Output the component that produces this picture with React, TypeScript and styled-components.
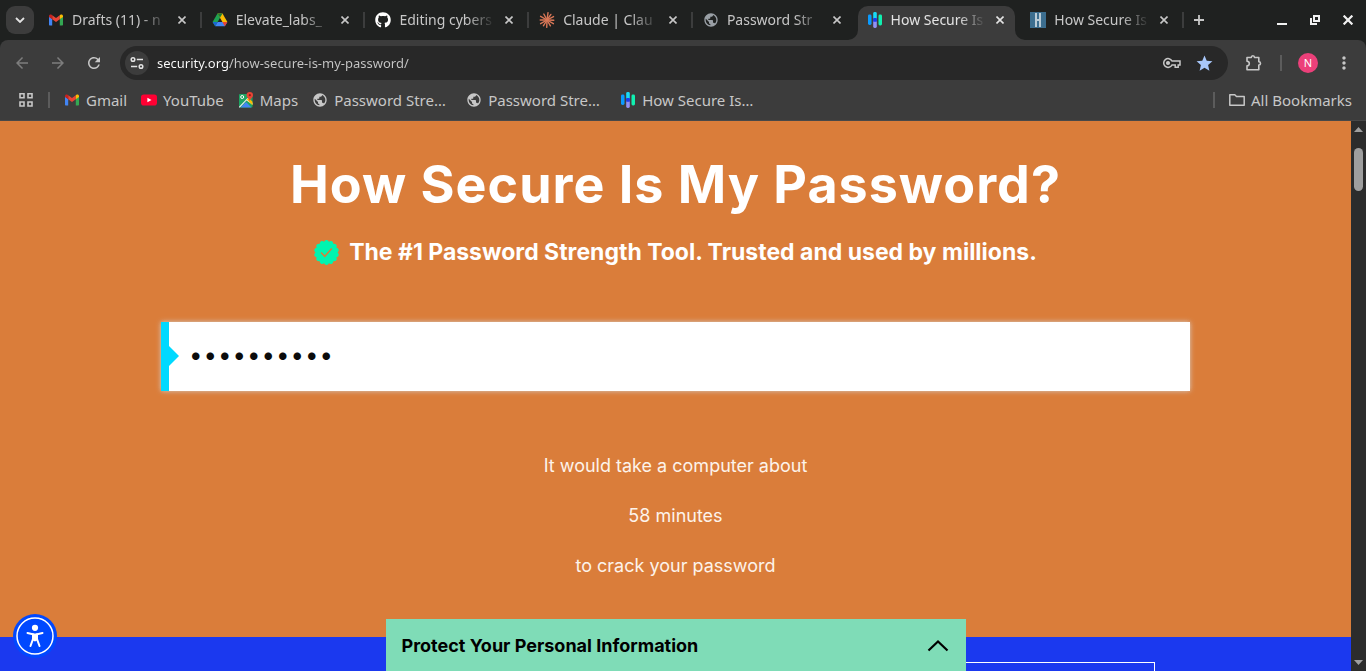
import React, { useState } from "react";
import styled, { createGlobalStyle, css } from "styled-components";
import { MdArrowBack, MdArrowForward, MdMoreVert, MdPublic, MdRefresh, MdStar } from "react-icons/md";
import { FaGithub } from "react-icons/fa";

const uiFont = '"Noto Sans", "Open Sans", sans-serif';
const siteFont = 'Inter, "Open Sans", sans-serif';

const colors = {
  strip: "#1f2120",
  toolbar: "#3c3c3c",
  omnibox: "#282828",
  uiText: "#c7c7c7",
  orange: "#da7d3a",
  blue: "#1b39ef",
  mint: "#7fdcb7",
  cyan: "#00d9ff",
};

const GlobalStyle = createGlobalStyle`
  *, *::before, *::after { box-sizing: border-box; }
  body { margin: 0; overflow: hidden; }
  button { border: 0; padding: 0; margin: 0; background: none; color: inherit; font: inherit; cursor: pointer; }
  a { color: inherit; text-decoration: none; }
  svg { display: block; flex: none; }
`;

const Browser = styled.div`
  display: flex;
  flex-direction: column;
  height: 100vh;
  font-family: ${uiFont};
  font-size: 14px;
  line-height: 20px;
  color: ${colors.uiText};
  background: ${colors.strip};
`;

/* ---------- tab strip ---------- */

const TabStrip = styled.header`
  display: flex;
  align-items: center;
  height: 40px;
  padding: 0 6px;
`;

const TabSearch = styled.button`
  display: grid;
  place-items: center;
  flex: none;
  width: 28px;
  height: 28px;
  margin-right: 2px;
  border-radius: 9px;
  background: ${colors.toolbar};
  color: #e3e3e3;
`;

const TabList = styled.div`
  display: flex;
  flex: 0 1 1146px;
  min-width: 0;
  height: 40px;
`;

const activeTab = css`
  &::before {
    content: "";
    position: absolute;
    z-index: 0;
    inset: 6px 3px 0;
    border-radius: 10px 10px 0 0;
    background: ${colors.toolbar};
  }
`;

const Flare = styled.svg<{ $side: "left" | "right" }>`
  position: absolute;
  bottom: 0;
  ${(p) => (p.$side === "left" ? "left: -7px;" : "right: -7px; transform: scaleX(-1);")}
`;

const TabItem = styled.div<{ $active?: boolean; $line?: boolean }>`
  position: relative;
  display: flex;
  align-items: center;
  flex: 1 1 0;
  min-width: 0;
  padding: 0 10px 0 12px;
  color: ${(p) => (p.$active ? "#e3e3e3" : colors.uiText)};
  ${(p) => p.$active && activeTab}
  ${(p) =>
    p.$line &&
    css`
      &::after {
        content: "";
        position: absolute;
        right: -2px;
        width: 2px;
        height: 16px;
        background: #3c3d3d;
      }
    `}
`;

const TabLabel = styled.button`
  position: relative;
  display: flex;
  align-items: center;
  gap: 8px;
  flex: 1;
  min-width: 0;
  height: 28px;
  text-align: left;
`;

const TabTitle = styled.span`
  flex: 1;
  min-width: 0;
  overflow: hidden;
  white-space: nowrap;
  mask-image: linear-gradient(90deg, #000 72%, transparent 102%);
`;

const CloseButton = styled.button`
  position: relative;
  display: grid;
  place-items: center;
  flex: none;
  width: 16px;
  height: 16px;
  margin-left: 8px;
`;

const NewTab = styled.button`
  display: grid;
  place-items: center;
  width: 28px;
  height: 28px;
  margin-left: 3px;
`;

const WindowControls = styled.div`
  display: flex;
  gap: 9px;
  margin-left: auto;
  color: #f1f1f1;
`;

const WindowButton = styled.button`
  display: grid;
  place-items: center;
  width: 24px;
  height: 24px;
`;

/* ---------- toolbar ---------- */

const Toolbar = styled.div`
  display: flex;
  align-items: center;
  height: 46px;
  padding: 0 10px;
  border-radius: 8px 8px 0 0;
  background: ${colors.toolbar};
`;

const NavButton = styled.button`
  display: grid;
  place-items: center;
  flex: none;
  width: 24px;
  height: 28px;
  margin-right: 12px;

  &:disabled {
    color: #7d7d7d;
  }
`;

const Omnibox = styled.form`
  display: flex;
  align-items: center;
  flex: 1;
  min-width: 0;
  height: 34px;
  padding: 0 12px 0 5px;
  margin: 0 14px 0 2px;
  border-radius: 17px;
  background: ${colors.omnibox};
`;

const SiteInfo = styled.button`
  display: grid;
  place-items: center;
  flex: none;
  width: 24px;
  height: 24px;
  margin-right: 8px;
  border-radius: 50%;
  background: ${colors.toolbar};
  color: #e3e3e3;
`;

const UrlField = styled.input`
  flex: 1;
  min-width: 0;
  height: 24px;
  padding: 0;
  border: 0;
  outline: 0;
  font: inherit;
  font-size: 13px;
  color: transparent;
  background: linear-gradient(90deg, #ffffff 72px, #c7c7c7 72px);
  background-clip: text;
`;

const IconButton = styled.button`
  display: grid;
  place-items: center;
  flex: none;
  width: 24px;
  height: 24px;
  margin-left: 8px;
`;

const Divider = styled.span`
  flex: none;
  width: 2px;
  height: 16px;
  background: #5c5c5c;
`;

const Tools = styled.div`
  display: flex;
  align-items: center;
  gap: 14px;
`;

const ToolButton = styled.button`
  display: grid;
  place-items: center;
  width: 24px;
  height: 24px;
`;

const Avatar = styled.button`
  width: 20px;
  height: 20px;
  margin-left: 2px;
  border-radius: 50%;
  background: #ec407a;
  color: #ffffff;
  font-size: 11px;
  line-height: 20px;
`;

/* ---------- bookmarks ---------- */

const Bookmarks = styled.nav`
  display: flex;
  align-items: center;
  height: 35px;
  padding: 0 14px 7px;
  border-bottom: 1px solid #484848;
  font-size: 15px;
  background: ${colors.toolbar};
`;

const AppsButton = styled(ToolButton)`
  margin-right: 10px;
`;

const BookmarkList = styled.div`
  display: flex;
  flex: 1;
  gap: 14px;
  min-width: 0;
  margin-left: 14px;
`;

const Bookmark = styled.a`
  display: flex;
  align-items: center;
  gap: 6px;
  white-space: nowrap;
`;

const BookmarkTitle = styled.span<{ $long?: boolean }>`
  min-width: ${(p) => (p.$long ? "118px" : "0")};
`;

/* ---------- site ---------- */

const Viewport = styled.div`
  display: flex;
  flex: 1;
  min-height: 0;
`;

const Site = styled.main`
  position: relative;
  flex: 1;
  min-width: 0;
  overflow: hidden;
  font-family: ${siteFont};
  color: #ffffff;
  background: ${colors.blue};
`;

const Hero = styled.section`
  display: flex;
  flex-direction: column;
  align-items: center;
  padding: 32px 24px 56px;
  text-align: center;
  background: ${colors.orange};
`;

const Title = styled.h1`
  margin: 0;
  font-size: 52px;
  line-height: 64px;
  font-weight: 700;
  letter-spacing: 1px;
`;

const Tagline = styled.p`
  display: flex;
  align-items: center;
  gap: 10px;
  margin: 20px 0 55px;
  font-size: 23px;
  line-height: 30px;
  font-weight: 700;
`;

const PasswordBox = styled.label`
  position: relative;
  display: block;
  width: 100%;
  max-width: 1029px;
  border-left: 8px solid ${colors.cyan};
  box-shadow: 0 0 5px rgba(214, 214, 214, 0.9);

  &::before {
    content: "";
    position: absolute;
    top: 24px;
    left: 0;
    border: 10px solid transparent;
    border-right: 0;
    border-left-color: ${colors.cyan};
  }
`;

const PasswordField = styled.input`
  display: block;
  width: 100%;
  height: 69px;
  padding: 0 20px 4px;
  border: 0;
  border-radius: 0;
  outline: 0;
  color: #0b0b0b;
  background: #ffffff;
  font-family: ${siteFont};
  font-size: 24px;
  letter-spacing: 1px;
`;

const Result = styled.div`
  display: flex;
  flex-direction: column;
  gap: 20px;
  margin-top: 60px;
  font-size: 18px;
  line-height: 30px;
  color: #fdf3ea;

  p {
    margin: 0;
  }
`;

const Details = styled.section`
  display: flex;
  justify-content: flex-end;
  padding: 25px 196px 40px;
`;

const DetailCard = styled.div`
  width: 440px;
  height: 240px;
  border: 1px solid #ffffff;
`;

const PromoBar = styled.button`
  position: absolute;
  bottom: 0;
  left: 50%;
  display: flex;
  align-items: center;
  justify-content: space-between;
  width: 580px;
  height: 52px;
  padding: 2px 16px 0;
  margin-left: -290px;
  background: ${colors.mint};
  color: #000000;
  font-size: 18px;
  line-height: 24px;
  font-weight: 700;
`;

const AccessibilityButton = styled.button`
  position: absolute;
  bottom: 13px;
  left: 13px;
`;

const Scrollbar = styled.div`
  display: flex;
  flex-direction: column;
  align-items: center;
  flex: none;
  width: 15px;
  padding: 6px 0;
  background: #2c2c2c;
  color: #9f9f9f;
`;

const Thumb = styled.div`
  width: 9px;
  height: 43px;
  margin: 16px 0 auto;
  border-radius: 5px;
  background: #9f9f9f;
`;

/* ---------- icons ---------- */

const CloseIcon = ({ size = 8, weight = 2 }: { size?: number; weight?: number }) => (
  <svg width={size} height={size} viewBox="0 0 8 8" stroke="currentColor" strokeWidth={weight}>
    <path d="M.5.5l7 7M7.5.5l-7 7" />
  </svg>
);

const GmailIcon = () => (
  <svg width="16" height="16" viewBox="0 0 16 16">
    <path fill="#4285f4" d="M1 4.5v8c0 .6.4 1 1 1h2.200V7z" />
    <path fill="#34a853" d="M15 4.500v8c0 .6-.4 1-1 1h-2.200V7z" />
    <path fill="#ea4335" d="M4.200 3.200L8 6.100l3.800-2.900v4L8 10.100 4.200 7.200z" />
    <path fill="#c5221f" d="M1 4v1l3.200 2.300V3.200l-.6-.4C2.500 2 1 2.700 1 4z" />
    <path fill="#fbbc04" d="M15 4v1l-3.200 2.300V3.200l.6-.4C13.500 2 15 2.700 15 4z" />
  </svg>
);

const DriveIcon = () => (
  <svg width="16" height="16" viewBox="0 0 16 16">
    <path fill="#1ea352" d="M5.500 1.500L8 5.800 3.200 14.200 .6 9.900z" />
    <path fill="#fbbc04" d="M5.500 1.500h5l4.900 8.400h-5z" />
    <path fill="#188038" d="M5.500 1.500h5L8 5.800z" />
    <path fill="#4285f4" d="M3.200 14.200l2.400-4.300h9.800l-2.600 4.300z" />
    <path fill="#ea4335" d="M10.400 9.900h5l-2.600 4.300z" />
    <path fill="#1967d2" d="M.6 9.900h5l-2.400 4.300z" />
  </svg>
);

const ClaudeIcon = () => (
  <svg width="16" height="16" viewBox="0 0 16 16" stroke="#d97757" strokeWidth="1.400" strokeLinecap="round">
    {[8, 35, 62, 92, 120, 150, 182, 212, 240, 270, 300, 332].map((angle, i) => (
      <path key={angle} d={`M8 8V${i % 2 ? 1.2 : 0.6}`} transform={`rotate(${angle} 8 8)`} />
    ))}
  </svg>
);

const SecurityIcon = () => (
  <svg width="16" height="16" viewBox="0 0 16 16">
    <rect x="1" y="2.500" width="3.500" height="10.500" rx="1.400" fill="#0a9bff" />
    <rect x="6.200" y="0" width="3.600" height="8" rx="1.400" fill="#18d9f5" />
    <rect x="6.200" y="8" width="3.600" height="8" rx="1.400" fill="#9191f5" />
    <rect x="6.200" y="6" width="3.600" height="3.800" rx=".6" fill="#1b39ef" />
    <rect x="11.500" y="2.500" width="3.500" height="11" rx="1.400" fill="#10f0b0" />
  </svg>
);

const HostIcon = () => (
  <svg width="16" height="16" viewBox="0 0 16 16">
    <path fill="#3c6e8f" d="M0 0h16v16H0z" />
    <path fill="#b9cbd6" d="M5 1h2v6h2V1h2v14H9V9H7v6H5z" />
  </svg>
);

const YouTubeIcon = () => (
  <svg width="16" height="16" viewBox="0 0 16 16">
    <rect y="2.500" width="16" height="11" rx="2.800" fill="#ff0033" />
    <path fill="#ffffff" d="M6.400 5.700v4.600L10.500 8z" />
  </svg>
);

const MapsIcon = () => (
  <svg width="16" height="16" viewBox="0 0 16 16">
    <rect x="1" y="2" width="13.500" height="13.500" rx="1" fill="#1ea362" />
    <path fill="#e8eaed" d="M1 14.800L9.500 6l5 5v1.800L8.500 8.500 2 15.500H1z" />
    <path fill="#4285f4" d="M2.500 15.500L8 10l5.500 5.500z" />
    <path fill="#fbbc04" d="M8.800 7.500l1.700-1.700 4 4v3.500z" />
    <circle cx="4.200" cy="5" r="1.500" fill="none" stroke="#ffffff" />
    <path fill="#ea4335" d="M11.800 0a3.200 3.200 0 0 1 3.200 3.200c0 2.300-2.400 2.800-3.200 6-.8-3.200-3.200-3.700-3.200-6A3.200 3.200 0 0 1 11.800 0z" />
    <circle cx="11.800" cy="3.200" r="1.100" fill="#8b1f16" />
  </svg>
);

const TuneIcon = () => (
  <svg width="14" height="14" viewBox="0 0 14 14" fill="none" stroke="currentColor" strokeWidth="1.500">
    <circle cx="3" cy="3.500" r="1.800" />
    <path d="M6.800 3.500H13M1 10.500h6.200" />
    <circle cx="11" cy="10.500" r="1.800" />
  </svg>
);

const KeyIcon = () => (
  <svg width="20" height="12" viewBox="0 0 20 12" fill="none" stroke="currentColor" strokeWidth="1.500">
    <path d="M10 4A4.400 4.400 0 1 0 10 8h3.200v2.200h3V8H18V4z" />
    <circle cx="6" cy="6" r="1.300" fill="currentColor" />
  </svg>
);

const PuzzleIcon = () => (
  <svg width="18" height="18" viewBox="0 0 18 18" fill="none" stroke="currentColor" strokeWidth="1.600">
    <path
      d="M2 3.500h4.300c0-1 .7-1.700 1.600-1.700s1.600.7 1.600 1.700h4.300v4.300c1 0 1.700.7 1.700 1.600s-.7 1.600-1.700 1.600v4.800H2v-3.900c1.500 0 2.300-1 2.300-2.300S3.500 7.300 2 7.300z"
      strokeLinejoin="round"
    />
  </svg>
);

const AppsIcon = () => (
  <svg width="16" height="16" viewBox="0 0 16 16" fill="none" stroke="currentColor" strokeWidth="1.600">
    <path d="M2 1.800h4v4H2zM10 1.800h4v4h-4zM2 10h4v4H2zM10 10h4v4h-4z" />
  </svg>
);

const FolderIcon = () => (
  <svg width="16" height="14" viewBox="0 0 16 14" fill="none" stroke="currentColor" strokeWidth="1.500">
    <path d="M.8 1.800h5L7.500 3.500h7.700v8.700H.8z" strokeLinejoin="round" />
  </svg>
);

const sealPath = (() => {
  const points: string[] = [];
  for (let i = 0; i < 224; i++) {
    const a = (i / 224) * Math.PI * 2;
    const r = 11 + 1.5 * Math.abs(Math.cos(a * 7));
    points.push(`${(12.5 + r * Math.sin(a)).toFixed(2)} ${(12.5 - r * Math.cos(a)).toFixed(2)}`);
  }
  return `M${points.join("L")}Z`;
})();

const SealIcon = () => (
  <svg width="25" height="25" viewBox="0 0 25 25">
    <path fill="#00f5b0" d={sealPath} />
    <path d="M7 12.500l3.800 3.800 7-7.800" fill="none" stroke={colors.orange} strokeWidth="1.500" />
  </svg>
);

const AccessibilityIcon = () => (
  <svg width="44" height="44" viewBox="0 0 44 44">
    <circle cx="22" cy="22" r="22" fill="#0048ff" />
    <circle cx="22" cy="22" r="18" fill="none" stroke="#ffffff" strokeWidth="1.500" />
    <circle cx="22" cy="13.800" r="3.100" fill="#ffffff" />
    <path
      d="M14.500 19l5.500 1.200V25l-2.500 7M29.500 19L24 20.200V25l2.500 7"
      fill="none"
      stroke="#ffffff"
      strokeWidth="2"
      strokeLinecap="round"
    />
    <path d="M19 19.500h6v6.500l-3 1.500-3-1.500z" fill="#ffffff" />
  </svg>
);

/* ---------- data ---------- */

const tabs = [
  { title: "Drafts (11) - n", icon: <GmailIcon />, line: true },
  { title: "Elevate_labs_", icon: <DriveIcon />, line: true },
  { title: "Editing cybers", icon: <FaGithub size={16} color="#ffffff" />, line: true },
  { title: "Claude | Clau", icon: <ClaudeIcon />, line: true },
  { title: "Password Str", icon: <MdPublic size={16} color="#9aa0a6" /> },
  { title: "How Secure Is", icon: <SecurityIcon />, active: true },
  { title: "How Secure Is", icon: <HostIcon />, line: true },
];

const bookmarks = [
  { title: "Gmail", icon: <GmailIcon /> },
  { title: "YouTube", icon: <YouTubeIcon /> },
  { title: "Maps", icon: <MapsIcon /> },
  { title: "Password Stre…", icon: <MdPublic size={16} />, long: true },
  { title: "Password Stre…", icon: <MdPublic size={16} />, long: true },
  { title: "How Secure Is…", icon: <SecurityIcon />, long: true },
];

const TabFlare = ({ side }: { side: "left" | "right" }) => (
  <Flare $side={side} width="10" height="10" viewBox="0 0 10 10" aria-hidden="true">
    <path d="M10 0v10H0A10 10 0 0 0 10 0z" fill={colors.toolbar} />
  </Flare>
);

export default function App() {
  const [url, setUrl] = useState("security.org/how-secure-is-my-password/");
  const [password, setPassword] = useState("abcdefghij");

  return (
    <Browser>
      <GlobalStyle />
      <TabStrip>
        <TabSearch aria-label="Search tabs">
          <svg width="10" height="6" viewBox="0 0 10 6" fill="none" stroke="currentColor" strokeWidth="1.800">
            <path d="M1 1l4 4 4-4" />
          </svg>
        </TabSearch>
        <TabList>
          {tabs.map((tab, i) => (
            <TabItem key={i} $active={tab.active} $line={tab.line}>
              {tab.active && (
                <>
                  <TabFlare side="left" />
                  <TabFlare side="right" />
                </>
              )}
              <TabLabel>
                {tab.icon}
                <TabTitle>{tab.title}</TabTitle>
              </TabLabel>
              <CloseButton aria-label="Close tab">
                <CloseIcon weight={1.6} />
              </CloseButton>
            </TabItem>
          ))}
        </TabList>
        <NewTab aria-label="New tab">
          <svg width="12" height="12" viewBox="0 0 12 12" stroke="currentColor" strokeWidth="1.800">
            <path d="M6 1v10M1 6h10" />
          </svg>
        </NewTab>
        <WindowControls>
          <WindowButton aria-label="Minimize">
            <svg width="10" height="10" viewBox="0 0 10 10">
              <path d="M0 8h10v2H0z" fill="currentColor" />
            </svg>
          </WindowButton>
          <WindowButton aria-label="Restore">
            <svg width="10" height="10" viewBox="0 0 10 10" fill="none" stroke="currentColor" strokeWidth="2">
              <path d="M4 1h5v5H4zM1 3v6h6" />
            </svg>
          </WindowButton>
          <WindowButton aria-label="Close window">
            <CloseIcon size={10} weight={1.8} />
          </WindowButton>
        </WindowControls>
      </TabStrip>

      <Toolbar>
        <NavButton aria-label="Back" disabled>
          <MdArrowBack size={18} />
        </NavButton>
        <NavButton aria-label="Forward" disabled>
          <MdArrowForward size={18} />
        </NavButton>
        <NavButton aria-label="Reload">
          <MdRefresh size={18} />
        </NavButton>
        <Omnibox onSubmit={(e) => e.preventDefault()}>
          <SiteInfo type="button" aria-label="Site information">
            <TuneIcon />
          </SiteInfo>
          <UrlField aria-label="Address" value={url} onChange={(e) => setUrl(e.target.value)} />
          <IconButton type="button" aria-label="Saved passwords">
            <KeyIcon />
          </IconButton>
          <IconButton type="button" aria-label="Edit bookmark">
            <MdStar size={19} color="#a8c7fa" />
          </IconButton>
        </Omnibox>
        <Tools>
          <ToolButton aria-label="Extensions">
            <PuzzleIcon />
          </ToolButton>
          <Divider />
          <Avatar aria-label="Profile">N</Avatar>
          <ToolButton aria-label="Menu">
            <MdMoreVert size={20} />
          </ToolButton>
        </Tools>
      </Toolbar>

      <Bookmarks>
        <AppsButton aria-label="Apps">
          <AppsIcon />
        </AppsButton>
        <Divider />
        <BookmarkList>
          {bookmarks.map((b, i) => (
            <Bookmark key={i} href="#">
              {b.icon}
              <BookmarkTitle $long={b.long}>{b.title}</BookmarkTitle>
            </Bookmark>
          ))}
        </BookmarkList>
        <Tools>
          <Divider />
          <Bookmark href="#">
            <FolderIcon />
            All Bookmarks
          </Bookmark>
        </Tools>
      </Bookmarks>

      <Viewport>
        <Site>
          <Hero>
            <Title>How Secure Is My Password?</Title>
            <Tagline>
              <SealIcon />
              The #1 Password Strength Tool. Trusted and used by millions.
            </Tagline>
            <PasswordBox>
              <PasswordField
                type="password"
                aria-label="Enter password"
                value={password}
                onChange={(e) => setPassword(e.target.value)}
              />
            </PasswordBox>
            <Result>
              <p>It would take a computer about</p>
              <p>58 minutes</p>
              <p>to crack your password</p>
            </Result>
          </Hero>
          <Details>
            <DetailCard />
          </Details>
          <PromoBar>
            Protect Your Personal Information
            <svg width="24" height="14" viewBox="0 0 24 14" fill="none" stroke="#000000" strokeWidth="2.200">
              <path d="M2.500 11.500L12 2.500l9.500 9" />
            </svg>
          </PromoBar>
          <AccessibilityButton aria-label="Accessibility options">
            <AccessibilityIcon />
          </AccessibilityButton>
        </Site>
        <Scrollbar aria-hidden="true">
          <svg width="9" height="5" viewBox="0 0 9 5">
            <path d="M0 5l4.500-5L9 5z" fill="currentColor" />
          </svg>
          <Thumb />
          <svg width="9" height="5" viewBox="0 0 9 5">
            <path d="M0 0l4.500 5L9 0z" fill="currentColor" />
          </svg>
        </Scrollbar>
      </Viewport>
    </Browser>
  );
}
